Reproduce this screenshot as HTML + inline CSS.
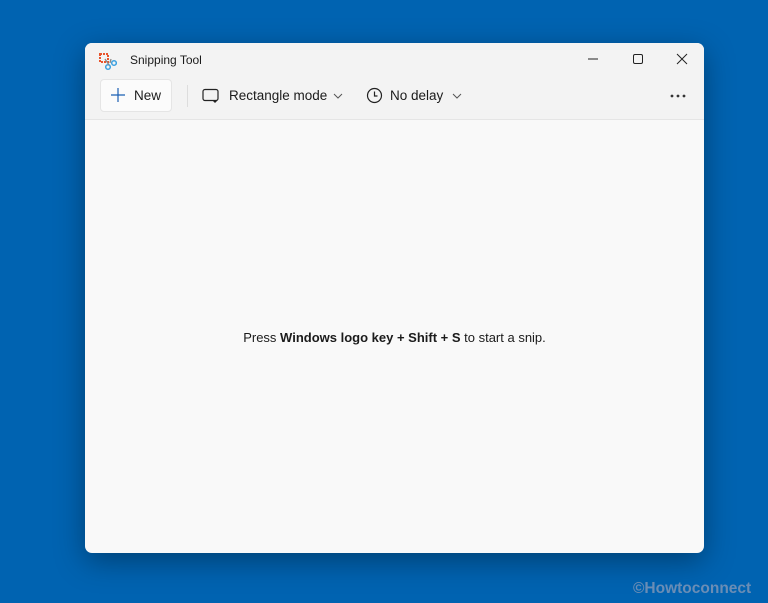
<!DOCTYPE html>
<html><head><style>
body{margin:0;width:768px;height:603px;background:#0063b1;overflow:hidden;font-family:"Liberation Sans",sans-serif;position:relative}
.win{position:absolute;left:85px;top:43px;width:619px;height:510px;background:#f9f9f9;border-radius:7px;box-shadow:0 8px 30px rgba(0,0,0,.35);overflow:hidden}
.top{height:76px;background:#f3f3f3;border-bottom:1px solid #e5e5e5}
.t{position:absolute;font-size:12px;color:#1b1b1b}
.btn{position:absolute;left:15px;top:36px;width:72px;height:33px;background:#fbfbfb;border:1px solid #e5e5e5;border-radius:4px;box-sizing:border-box}
.tb{position:absolute;font-size:13.5px;color:#1b1b1b}
.wm{position:absolute;left:633px;top:580px;font-size:15.5px;font-weight:bold;color:#6a8db5}
</style></head><body>
<div class="win">
<div class="top"></div>
<svg style="position:absolute;left:14px;top:10px" width="18" height="18" viewBox="0 0 18 18"><rect x="1" y="1" width="8" height="8" fill="none" stroke="#e8542c" stroke-width="2" stroke-dasharray="2 1"/><circle cx="9" cy="14" r="2.3" fill="none" stroke="#3aa0e0" stroke-width="1.5"/><circle cx="15" cy="10" r="2.3" fill="none" stroke="#3aa0e0" stroke-width="1.5"/><path d="M6 6L10 12M12 6L11 10" stroke="#888" stroke-width="1.3"/></svg>
<div class="t" style="left:45px;top:10px">Snipping Tool</div>
<svg style="position:absolute;left:500px;top:8px" width="110" height="16"><path d="M3 8H13" stroke="#222"/><rect x="48.5" y="3.5" width="9" height="9" rx="1.5" fill="none" stroke="#222"/><path d="M92 3L102 13M102 3L92 13" stroke="#222"/></svg>
<div class="btn"></div>
<svg style="position:absolute;left:26px;top:45px" width="14" height="14"><path d="M7 0V14M0 7H14" stroke="#1a5fb4" stroke-width="1.2"/></svg>
<div class="tb" style="left:49px;top:45px">New</div>
<div style="position:absolute;left:102px;top:42px;width:1px;height:22px;background:#ddd"></div>
<svg style="position:absolute;left:117px;top:45px" width="18" height="16"><rect x="1" y="1.5" width="15" height="11" rx="2" fill="none" stroke="#222" stroke-width="1.2"/><path d="M13 12V15M11.5 13.5H14.5" stroke="#222"/></svg>
<div class="tb" style="left:144px;top:45px">Rectangle mode</div>
<svg style="position:absolute;left:248px;top:49px" width="10" height="8"><path d="M1 2L5 6L9 2" fill="none" stroke="#555"/></svg>
<svg style="position:absolute;left:281px;top:44px" width="17" height="17"><circle cx="8.5" cy="8.5" r="7" fill="none" stroke="#222" stroke-width="1.2"/><path d="M8.5 4.5V9H11.5" fill="none" stroke="#222" stroke-width="1.2"/></svg>
<div class="tb" style="left:305px;top:45px">No delay</div>
<svg style="position:absolute;left:367px;top:49px" width="10" height="8"><path d="M1 2L5 6L9 2" fill="none" stroke="#555"/></svg>
<svg style="position:absolute;left:585px;top:51px" width="18" height="5"><circle cx="2" cy="2" r="1.4" fill="#333"/><circle cx="8" cy="2" r="1.4" fill="#333"/><circle cx="14" cy="2" r="1.4" fill="#333"/></svg>
<div style="position:absolute;left:0;width:619px;top:287px;text-align:center;font-size:13px;color:#1b1b1b">Press <b>Windows logo key + Shift + S</b> to start a snip.</div>
</div>
<div class="wm">©Howtoconnect</div>
</body></html>
